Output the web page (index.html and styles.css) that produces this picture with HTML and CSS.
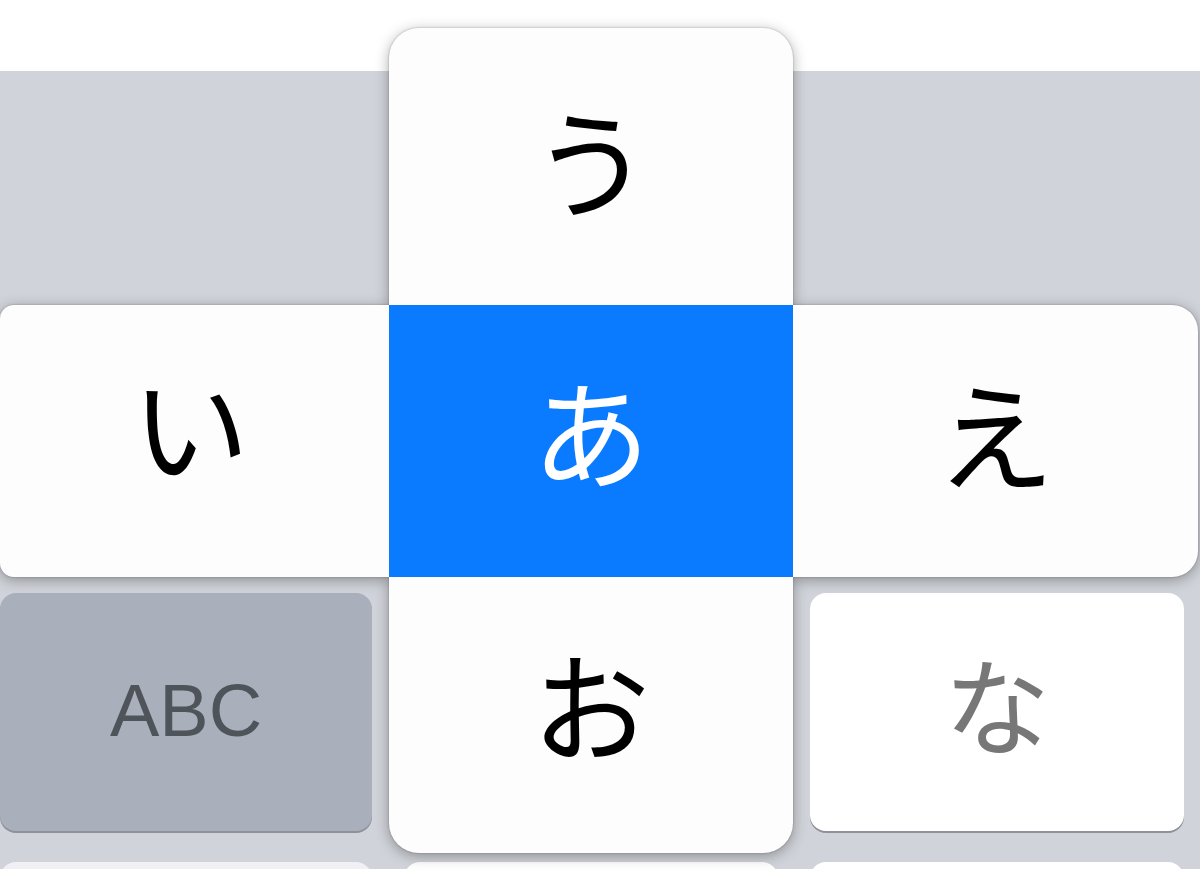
FILE: index.html
```html
<!DOCTYPE html>
<html lang="ja">
<head>
<meta charset="utf-8">
<title>Flick keyboard</title>
<link rel="stylesheet" href="styles.css">
</head>
<body>
<div class="screen">
  <div class="keyboard">
    <div class="key key-dark"></div>
    <div class="key"></div>
    <div class="key"></div>
    <div class="key key-dark"><span class="label-abc">ABC</span></div>
    <div class="key"></div>
    <div class="key"><span class="label-kana">な</span></div>
    <div class="key key-light"></div>
    <div class="key"></div>
    <div class="key"></div>
  </div>
  <div class="flick">
    <div class="petal petal-up">う</div>
    <div class="petal petal-left">い</div>
    <div class="petal petal-center">あ</div>
    <div class="petal petal-right">え</div>
    <div class="petal petal-down">お</div>
  </div>
</div>
</body>
</html>
```
FILE: styles.css
```css
html, body {
  margin: 0;
  padding: 0;
  background: #ffffff;
}

.screen {
  position: relative;
  width: 1200px;
  height: 888px;
  overflow: hidden;
  background: #ffffff;
}

.keyboard {
  margin-top: 71px;
  height: 798px;
  box-sizing: border-box;
  padding-top: 253px;
  background: #d0d3d9;
  overflow: hidden;
  display: grid;
  grid-template-columns: 372px 374px 374px;
  grid-auto-rows: 238px;
  column-gap: 32px;
  row-gap: 31px;
}

.key {
  background: #ffffff;
  border-radius: 16px;
  box-shadow: 0 2px 0 #8e9197;
  display: flex;
  align-items: center;
  justify-content: center;
}

.key-dark {
  background: #aab0bb;
}

.key-light {
  background: #f1f1f5;
}

.label-abc {
  font-family: "Liberation Sans", Arial, sans-serif;
  font-size: 74px;
  color: #4f545b;
  margin-top: -4px;
}

.label-kana {
  font-family: "Noto Sans CJK JP", sans-serif;
  font-size: 106px;
  line-height: 1;
  color: #777777;
  margin-top: -22px;
}

.flick {
  position: absolute;
  left: 0;
  top: 28px;
  display: grid;
  grid-template-columns: 389px 404px 405px;
  grid-template-rows: 277px 272px 276px;
  filter: drop-shadow(0 0 1px rgba(0, 0, 0, 0.25)) drop-shadow(0 3px 7px rgba(0, 0, 0, 0.32));
}

.petal {
  background: #fdfdfd;
  color: #000000;
  font-family: "Noto Sans CJK JP", sans-serif;
  font-size: 118px;
  line-height: 1;
  display: flex;
  align-items: center;
  justify-content: center;
}

.petal-up {
  grid-column: 2;
  grid-row: 1;
  border-radius: 30px 30px 0 0;
  padding-bottom: 18px;
}

.petal-left {
  grid-column: 1;
  grid-row: 2;
  border-radius: 14px 0 0 14px;
  padding-bottom: 36px;
  padding-right: 8px;
}

.petal-center {
  grid-column: 2;
  grid-row: 2;
  background: #0a7bff;
  color: #ffffff;
  padding-bottom: 24px;
}

.petal-right {
  grid-column: 3;
  grid-row: 2;
  border-radius: 0 26px 26px 0;
  padding-bottom: 20px;
}

.petal-down {
  grid-column: 2;
  grid-row: 3;
  border-radius: 0 0 30px 30px;
  padding-bottom: 26px;
}
```
